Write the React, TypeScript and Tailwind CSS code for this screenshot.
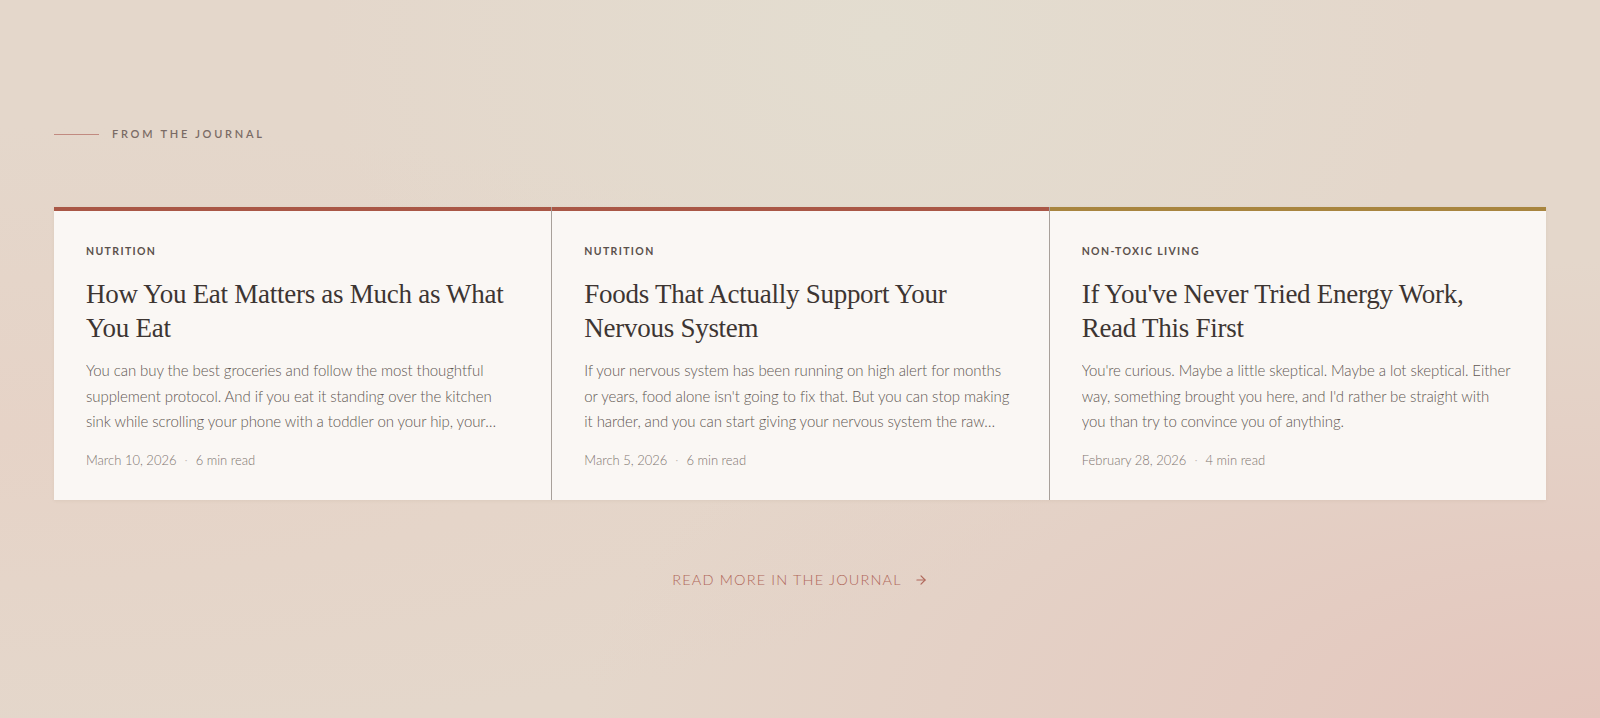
import React from 'react';
import { ArrowRight } from 'lucide-react';

type Post = {
  category: string;
  title: string;
  excerpt: string;
  date: string;
  readTime: string;
  accent: string;
};

const posts: Post[] = [
  {
    category: 'Nutrition',
    title: 'How You Eat Matters as Much as What You Eat',
    excerpt:
      'You can buy the best groceries and follow the most thoughtful supplement protocol. And if you eat it standing over the kitchen sink while scrolling your phone with a toddler on your hip, your body is still in survival mode.',
    date: 'March 10, 2026',
    readTime: '6 min read',
    accent: 'bg-[#a95746]',
  },
  {
    category: 'Nutrition',
    title: 'Foods That Actually Support Your Nervous System',
    excerpt:
      "If your nervous system has been running on high alert for months or years, food alone isn't going to fix that. But you can stop making it harder, and you can start giving your nervous system the raw materials it needs.",
    date: 'March 5, 2026',
    readTime: '6 min read',
    accent: 'bg-[#a95746]',
  },
  {
    category: 'Non-Toxic Living',
    title: "If You've Never Tried Energy Work, Read This First",
    excerpt:
      "You're curious. Maybe a little skeptical. Maybe a lot skeptical. Either way, something brought you here, and I'd rather be straight with you than try to convince you of anything.",
    date: 'February 28, 2026',
    readTime: '4 min read',
    accent: 'bg-[#a8853f]',
  },
];

const sans = "font-['Lato','Noto_Sans',sans-serif]";

function PostCard({ post, first }: { post: Post; first: boolean }) {
  return (
    <article className={`flex flex-col bg-[#faf7f4] ${first ? '' : 'border-l border-[#a8a09a]'}`}>
      <div className={`h-[4px] ${post.accent}`} />
      <div className="flex flex-col px-8 pt-[32px] pb-[30px]">
        <div className={`${sans} text-[10.5px] leading-4 font-bold uppercase tracking-[0.13em] text-[#5b514c]`}>
          {post.category}
        </div>
        <h3 className="mt-[18px] font-['Liberation_Serif',serif] text-[27px] leading-[34px] tracking-[-0.01em] text-[#3d3532]">
          {post.title}
        </h3>
        <p className={`${sans} mt-[13px] line-clamp-3 text-[15px] font-light leading-[25.5px] tracking-[-0.005em] text-[#625853]`}>
          {post.excerpt}
        </p>
        <div className={`${sans} mt-[15px] flex items-center gap-2 text-[13px] font-light leading-5 text-[#7f7570]`}>
          <span>{post.date}</span>
          <span className="text-[#c4bbb5]">·</span>
          <span>{post.readTime}</span>
        </div>
      </div>
    </article>
  );
}

export default function App() {
  return (
    <div className="min-h-[718px] w-full bg-[#e4d7cb] bg-[radial-gradient(ellipse_at_55%_5%,#e3ddd0_0%,transparent_45%),radial-gradient(ellipse_at_100%_100%,#e4c6bd_0%,transparent_45%),radial-gradient(ellipse_at_0%_60%,#e6d3c7_0%,transparent_50%)]">
      <section className="px-[54px] pt-[126px]">
        <div className="flex items-center gap-[13px]">
          <span className="h-px w-[45px] bg-[#c18a80]" />
          <span className={`${sans} text-[11px] leading-4 font-semibold uppercase tracking-[0.25em] text-[#7a6b65]`}>
            From the Journal
          </span>
        </div>

        <div className="mt-[65px] grid grid-cols-3 shadow-[0_1px_3px_rgba(120,90,70,0.08)]">
          {posts.map((post, i) => (
            <PostCard key={post.title} post={post} first={i === 0} />
          ))}
        </div>

        <div className="mt-[68px] flex justify-center">
          <a
            href="#"
            className={`${sans} flex items-center gap-3 text-[14.5px] font-light uppercase leading-6 tracking-[0.08em] text-[#b0675a]`}
          >
            Read more in the journal
            <ArrowRight className="h-[14px] w-[14px]" strokeWidth={2} />
          </a>
        </div>
      </section>
    </div>
  );
}
